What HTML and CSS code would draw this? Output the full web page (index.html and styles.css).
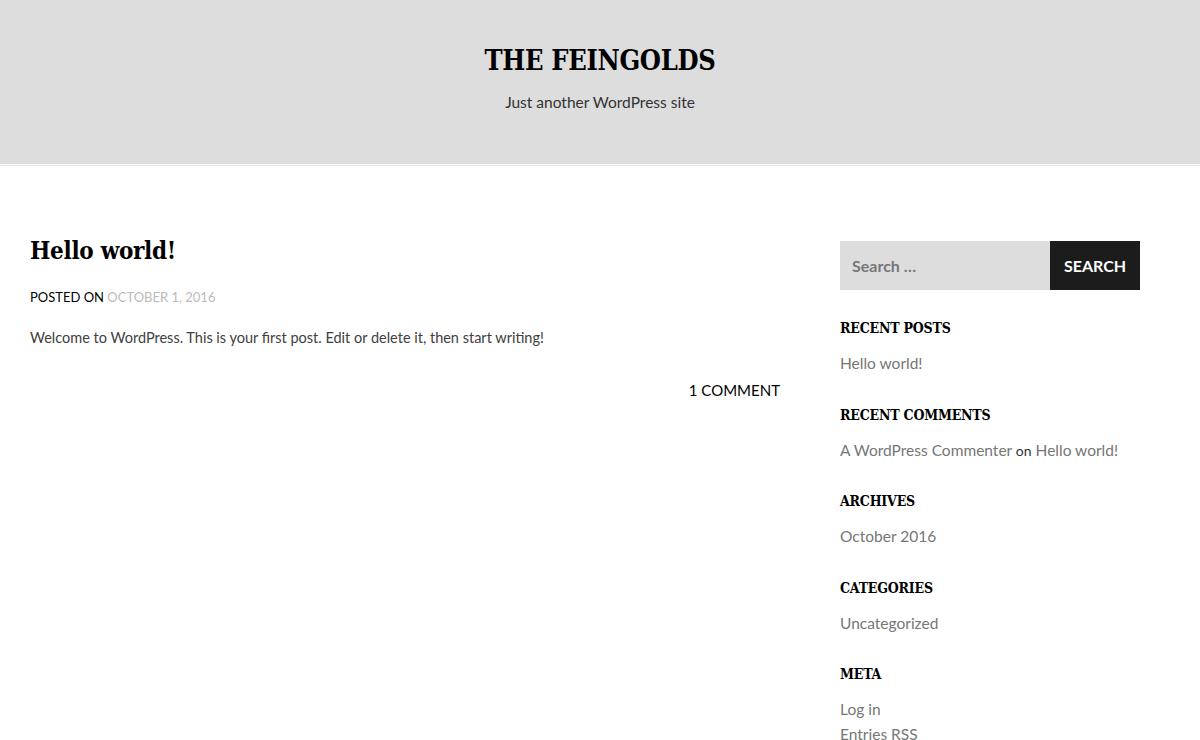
FILE: index.html
```html
<!DOCTYPE html>
<html lang="en">
<head>
    <meta charset="UTF-8">
    <title>The Feingolds</title>
    <link rel="stylesheet" href="styles.css">
</head>
<body>
<header class="site-header">
    <h1 class="site-title">THE FEINGOLDS</h1>
    <p class="site-description">Just another WordPress site</p>
</header>

<div class="site-content">
    <main class="content-area">
        <article class="post">
            <h2 class="entry-title">Hello world!</h2>
            <div class="entry-meta">POSTED ON <a href="#" class="posted-date">OCTOBER 1, 2016</a></div>
            <div class="entry-content">
                <p>Welcome to WordPress. This is your first post. Edit or delete it, then start writing!</p>
            </div>
            <div class="entry-footer"><a href="#">1 COMMENT</a></div>
        </article>
    </main>

    <aside class="sidebar">
        <form class="search-form">
            <input type="search" class="search-field" placeholder="Search &hellip;">
            <button type="submit" class="search-submit">SEARCH</button>
        </form>

        <section class="widget">
            <h3 class="widget-title">RECENT POSTS</h3>
            <ul><li><a href="#">Hello world!</a></li></ul>
        </section>
        <section class="widget">
            <h3 class="widget-title">RECENT COMMENTS</h3>
            <ul><li><a href="#">A WordPress Commenter</a> <span class="on">on</span> <a href="#">Hello world!</a></li></ul>
        </section>
        <section class="widget">
            <h3 class="widget-title">ARCHIVES</h3>
            <ul><li><a href="#">October 2016</a></li></ul>
        </section>
        <section class="widget">
            <h3 class="widget-title">CATEGORIES</h3>
            <ul><li><a href="#">Uncategorized</a></li></ul>
        </section>
        <section class="widget">
            <h3 class="widget-title">META</h3>
            <ul>
                <li><a href="#">Log in</a></li>
                <li><a href="#">Entries RSS</a></li>
            </ul>
        </section>
    </aside>
</div>
</body>
</html>
```

FILE: styles.css
```css
html, body {
    margin: 0;
    padding: 0;
}

body {
    font-family: Lato, "Open Sans", sans-serif;
    font-size: 15px;
    color: #404040;
    background: #fff;
}

a {
    text-decoration: none;
    color: #767676;
}

.site-header {
    background: #dddddd;
    height: 165px;
    box-sizing: border-box;
    padding-top: 44px;
    text-align: center;
    border-bottom: 1px solid #fff;
    box-shadow: 0 1px 0 #e4e4e4;
}

.site-title {
    font-family: "DejaVu Serif", serif;
    font-stretch: condensed;
    font-size: 27px;
    font-weight: bold;
    color: #000;
    margin: 0;
    line-height: 34px;
    letter-spacing: -0.3px;
}

.site-description {
    margin: 15px 0 0;
    font-size: 15.5px;
    color: #333;
}

.site-content {
    display: flex;
    padding: 70px 60px 0 30px;
}

.content-area {
    width: 750px;
    margin-right: 60px;
}

.entry-title {
    font-family: "DejaVu Serif", serif;
    font-stretch: condensed;
    font-size: 24px;
    font-weight: bold;
    color: #000;
    margin: 0;
    line-height: 32px;
    letter-spacing: -0.3px;
}

.entry-meta {
    margin-top: 22px;
    font-size: 13px;
    color: #000;
}

.posted-date {
    color: #bbb;
}

.entry-content p {
    margin: 21px 0 0;
    line-height: 24px;
    font-size: 14.5px;
}

.entry-footer {
    text-align: right;
    margin-top: 31px;
}

.entry-footer a {
    color: #000;
}

.sidebar {
    width: 300px;
    padding-top: 6px;
}

.search-form {
    display: flex;
    height: 49px;
    margin-bottom: 27px;
}

.search-field {
    width: 210px;
    border: none;
    background: #dddddd;
    padding: 0 12px;
    box-sizing: border-box;
    font-family: Lato, sans-serif;
    font-size: 16px;
    font-weight: bold;
    outline: none;
}

.search-field::placeholder {
    color: #777;
}

.search-submit {
    width: 90px;
    border: none;
    background: #1c1c1c;
    color: #fff;
    font-family: Lato, sans-serif;
    font-size: 16px;
    font-weight: bold;
}

.widget {
    margin-bottom: 27.5px;
}

.widget-title {
    font-family: "DejaVu Serif", serif;
    font-stretch: condensed;
    font-size: 14px;
    font-weight: bold;
    color: #000;
    margin: 0 0 12px;
    line-height: 22px;
    letter-spacing: -0.2px;
}

.widget ul {
    list-style: none;
    margin: 0;
    padding: 0;
}

.widget li {
    line-height: 25px;
    font-size: 15.5px;
}

.widget .on {
    color: #333;
    font-size: 14px;
}
```
